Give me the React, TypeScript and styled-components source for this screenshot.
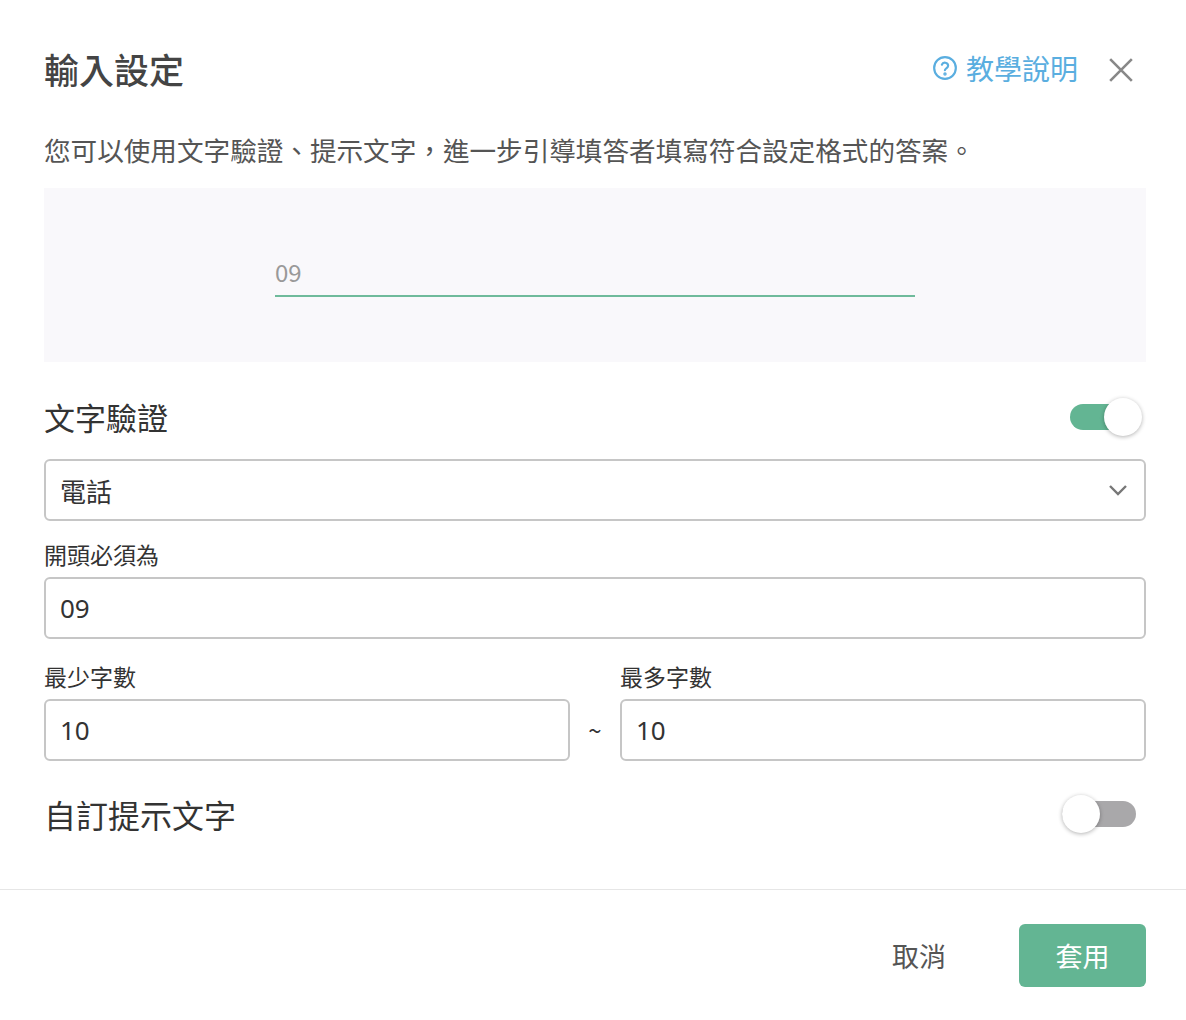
import React from "react";
import styled, { createGlobalStyle } from "styled-components";

const G = createGlobalStyle`
  body { margin: 0; background: #fff; font-family: "Noto Sans CJK TC", "Noto Sans", sans-serif; color: #333; }
`;
const Wrap = styled.div`width: 1186px; height: 1020px; background: #fff;`;
const Body = styled.div`padding: 0 40px 0 44px;`;
const Header = styled.div`display: flex; align-items: center; height: 140px;`;
const Title = styled.h1`margin: 0; font-size: 35px; font-weight: 500; color: #444; flex: 1; line-height: 1; position: relative; top: -2px;`;
const Help = styled.a`display: flex; align-items: center; gap: 8px; color: #5aaee0; font-size: 28px; margin-right: 30px; position: relative; top: -2px;`;
const Close = styled.span`color: #888; display: flex; margin-right: 12px;`;
const Desc = styled.p`margin: -10px 0 0; font-size: 26.6px; color: #555; line-height: 40px;`;
const Preview = styled.div`margin-top: 18px; height: 174px; background: #f9f8fb; display: flex; justify-content: center; align-items: flex-start;`;
const PreviewInput = styled.div`margin-top: 66px; width: 640px; border-bottom: 2px solid #6fba9b; color: #999; font-size: 24px; padding-bottom: 6px;`;
const Row = styled.div`display: flex; align-items: center; justify-content: space-between;`;
const Section = styled.h2`margin: 0; font-weight: 400; font-size: 31px; color: #333;`;
const Track = styled.div<{ on?: boolean }>`position: relative; width: ${p => (p.on ? 66 : 74)}px; height: 26px; border-radius: 13px; background: ${p => (p.on ? "#63b593" : "#a9a8aa")};`;
const Thumb = styled.div<{ on?: boolean }>`position: absolute; top: -6px; ${p => (p.on ? "right: -6px;" : "left: 0;")} width: 38px; height: 38px; border-radius: 50%; background: #fff; box-shadow: 0 1px 4px rgba(0,0,0,0.3);`;
const Box = styled.div`height: 58px; border: 2px solid #c6c6c6; border-radius: 6px; display: flex; align-items: center; padding: 0 14px; font-size: 26px; color: #333; justify-content: space-between; font-family: "Noto Sans", "Noto Sans CJK TC", sans-serif;`;
const Label = styled.div`font-size: 23px; color: #333; margin: 16px 0 6px;`;
const Pair = styled.div`display: grid; grid-template-columns: 1fr 50px 1fr; align-items: end; margin-top: 4px;`;
const Tilde = styled.div`text-align: center; font-size: 24px; padding-bottom: 14px;`;
const Divider = styled.div`height: 1px; background: #e6e6e6; margin-top: 52px;`;
const Footer = styled.div`display: flex; justify-content: flex-end; align-items: center; padding: 34px 40px 0 0; gap: 40px;`;
const Cancel = styled.button`border: 0; background: none; font-size: 27px; color: #555; font-family: inherit; width: 120px;`;
const Apply = styled.button`border: 0; background: #63b593; color: #fff; font-size: 27px; border-radius: 6px; width: 127px; height: 63px; font-family: inherit;`;

export default function App() {
  return (
    <Wrap>
      <G />
      <Body>
        <Header>
          <Title>輸入設定</Title>
          <Help>
            <svg width="26" height="26" viewBox="0 0 24 24" fill="none" stroke="#5aaee0" strokeWidth="2" strokeLinecap="round"><circle cx="12" cy="12" r="10"/><path d="M9.1 9a3 3 0 0 1 5.8 1c0 2-3 2.5-3 4"/><circle cx="12" cy="17.5" r="0.6" fill="#5aaee0"/></svg>
            教學說明
          </Help>
          <Close>
            <svg width="26" height="26" viewBox="0 0 24 24" stroke="#888" strokeWidth="2.4"><path d="M2 2l20 20M22 2L2 22"/></svg>
          </Close>
        </Header>
        <Desc>您可以使用文字驗證、提示文字，進一步引導填答者填寫符合設定格式的答案。</Desc>
        <Preview><PreviewInput>09</PreviewInput></Preview>
        <Row style={{ marginTop: 32 }}>
          <Section>文字驗證</Section>
          <Track on style={{ marginRight: 10 }}><Thumb on /></Track>
        </Row>
        <div style={{ height: 20 }} />
        <Box>
          <span style={{ fontFamily: '"Noto Sans CJK TC", sans-serif' }}>電話</span>
          <svg width="24" height="24" viewBox="0 0 24 24" fill="none" stroke="#777" strokeWidth="2.4"><path d="M4 8l8 8 8-8"/></svg>
        </Box>
        <Label>開頭必須為</Label>
        <Box>09</Box>
        <Pair>
          <div><Label>最少字數</Label><Box>10</Box></div>
          <Tilde>~</Tilde>
          <div><Label>最多字數</Label><Box>10</Box></div>
        </Pair>
        <Row style={{ marginTop: 30 }}>
          <Section style={{ fontSize: 32 }}>自訂提示文字</Section>
          <Track style={{ marginRight: 10 }}><Thumb /></Track>
        </Row>
      </Body>
      <Divider />
      <Footer>
        <Cancel>取消</Cancel>
        <Apply>套用</Apply>
      </Footer>
    </Wrap>
  );
}
